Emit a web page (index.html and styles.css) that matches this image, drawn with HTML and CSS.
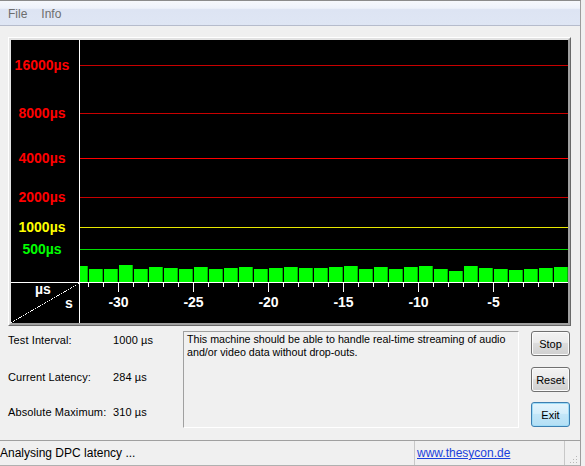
FILE: index.html
```html
<!DOCTYPE html>
<html lang="en">
  <head>
    <meta charset="utf-8">
    <title>DPC Latency Checker</title>
    <link rel="stylesheet" href="styles.css">
  </head>
  <body>
    <div class="window">
      <div class="menubar">
        <span class="menu-item">File</span>
        <span class="menu-item">Info</span>
      </div>

      <div class="main">
        <div class="frame">
          <div class="chart">
            <div class="upper">
              <div class="yaxis"></div>
              <div class="plot">
                <div class="bar" style="height:16px"></div>
                <div class="bar" style="height:13px"></div>
                <div class="bar" style="height:13px"></div>
                <div class="bar" style="height:17px"></div>
                <div class="bar" style="height:13px"></div>
                <div class="bar" style="height:15px"></div>
                <div class="bar" style="height:14px"></div>
                <div class="bar" style="height:13px"></div>
                <div class="bar" style="height:15px"></div>
                <div class="bar" style="height:13px"></div>
                <div class="bar" style="height:14px"></div>
                <div class="bar" style="height:15px"></div>
                <div class="bar" style="height:13px"></div>
                <div class="bar" style="height:14px"></div>
                <div class="bar" style="height:15px"></div>
                <div class="bar" style="height:14px"></div>
                <div class="bar" style="height:14px"></div>
                <div class="bar" style="height:15px"></div>
                <div class="bar" style="height:16px"></div>
                <div class="bar" style="height:13px"></div>
                <div class="bar" style="height:15px"></div>
                <div class="bar" style="height:13px"></div>
                <div class="bar" style="height:15px"></div>
                <div class="bar" style="height:16px"></div>
                <div class="bar" style="height:13px"></div>
                <div class="bar" style="height:11px"></div>
                <div class="bar" style="height:16px"></div>
                <div class="bar" style="height:14px"></div>
                <div class="bar" style="height:13px"></div>
                <div class="bar" style="height:12px"></div>
                <div class="bar" style="height:13px"></div>
                <div class="bar" style="height:14px"></div>
                <div class="bar" style="height:15px"></div>
              </div>

              <!-- threshold lines, one per level -->
              <div class="level lv-16000"><span class="tag red">16000µs</span><span class="line dim-red"></span></div>
              <div class="level lv-8000"><span class="tag red">8000µs</span><span class="line dim-red"></span></div>
              <div class="level lv-4000"><span class="tag red">4000µs</span><span class="line red-line"></span></div>
              <div class="level lv-2000"><span class="tag red">2000µs</span><span class="line dim-red"></span></div>
              <div class="level lv-1000"><span class="tag yellow">1000µs</span><span class="line yellow-line"></span></div>
              <div class="level lv-500"><span class="tag green">500µs</span><span class="line green-line"></span></div>
            </div>

            <div class="lower">
              <div class="corner">
                <svg width="68" height="40" viewBox="0 0 68 40" shape-rendering="crispEdges">
                  <line x1="0" y1="40" x2="68" y2="0" stroke="#fff" stroke-width="1" stroke-dasharray="1 1"/>
                </svg>
                <div class="unit-us">µs</div>
                <div class="unit-s">s</div>
              </div>
              <div class="xaxis">
                <div class="ticks"></div>
                <div class="xlabels">
                  <span>-30</span>
                  <span>-25</span>
                  <span>-20</span>
                  <span>-15</span>
                  <span>-10</span>
                  <span>-5</span>
                </div>
              </div>
            </div>
          </div>
        </div>

        <div class="panel">
          <div class="stats">
            <span>Test Interval:</span><span>1000 µs</span>
            <span>Current Latency:</span><span>284 µs</span>
            <span>Absolute Maximum:</span><span>310 µs</span>
          </div>
          <div class="message">This machine should be able to handle real-time streaming of audio<br>and/or video data without drop-outs.</div>
          <div class="buttons">
            <button class="btn">Stop</button>
            <button class="btn btn-reset">Reset</button>
            <button class="btn btn-default">Exit</button>
          </div>
        </div>
      </div>

      <div class="statusbar">
        <div class="status-text">Analysing DPC latency ...</div>
        <div class="status-link"><a href="#">www.thesycon.de</a></div>
        <div class="grip">
          <svg width="12" height="12" viewBox="0 0 12 12">
            <rect x="9" y="3" width="1" height="1" fill="#b8b8b8"/>
            <rect x="6" y="6" width="1" height="1" fill="#b8b8b8"/>
            <rect x="9" y="6" width="1" height="1" fill="#b8b8b8"/>
            <rect x="3" y="9" width="1" height="1" fill="#b8b8b8"/>
            <rect x="6" y="9" width="1" height="1" fill="#b8b8b8"/>
            <rect x="9" y="9" width="1" height="1" fill="#b8b8b8"/>
          </svg>
        </div>
      </div>
    </div>
  </body>
</html>
```

FILE: styles.css
```css
body {
  margin: 0;
  background: #f0f0f0;
  font-family: "Liberation Sans", Arial, sans-serif;
  font-size: 11px;
  color: #000;
}

.window {
  width: 581px;
  height: 466px;
  box-sizing: border-box;
  border-top: 1px solid #8b8b8b;
  border-right: 1px solid #9c9c9c;
  display: flex;
  flex-direction: column;
  background: #f0f0f0;
}

/* menu */
.menubar {
  height: 25px;
  box-sizing: border-box;
  border-bottom: 1px solid #b6bccc;
  background: linear-gradient(#f6f8fc, #eef2fa 30%, #dde4f3 36%, #dfe6f4);
  display: flex;
  padding: 1px 0 0 1px;
  font-size: 12px;
  line-height: 24px;
  color: #6d6d6d;
}
.menu-item {
  padding: 0 7px;
}

.main {
  flex: 1;
  padding: 11px 0 0 8px;
}

/* chart */
.frame {
  width: 563px;
  box-sizing: border-box;
  border: 1px solid;
  border-color: #fff #696969 #696969 #fff;
}
.chart {
  border: 2px solid;
  border-color: #e3e3e3 #a0a0a0 #a0a0a0 #e3e3e3;
  background: #000;
  height: 283px;
}
.upper {
  position: relative;
  display: flex;
  height: 243px;
  box-sizing: border-box;
  border-bottom: 1px solid #fff;
}
.yaxis {
  width: 69px;
  box-sizing: border-box;
  border-right: 1px solid #fff;
}
.plot {
  flex: 1;
  display: flex;
  justify-content: flex-end;
  align-items: flex-end;
  gap: 1px;
  overflow: hidden;
}
.bar {
  flex: none;
  width: 14px;
  box-sizing: border-box;
  background: #00ff00;
  border-right: 1px solid #00b400;
}

.level {
  position: absolute;
  left: 0;
  right: 0;
  height: 15px;
  display: flex;
  align-items: center;
}
.lv-16000 { top: 18px; }
.lv-8000 { top: 66px; }
.lv-4000 { top: 111px; }
.lv-2000 { top: 150px; }
.lv-1000 { top: 180px; }
.lv-500 { top: 202px; }

.tag {
  width: 69px;
  box-sizing: border-box;
  padding-right: 7px;
  text-align: center;
  font: bold 14px/15px "Liberation Sans", Arial, sans-serif;
}
.red { color: #ff0000; }
.yellow { color: #ffff00; }
.green { color: #00ff00; }

.line {
  flex: 1;
  height: 1px;
}
.dim-red { background: #c80000; }
.red-line { background: #ff0000; }
.yellow-line { background: #e8e800; }
.green-line { background: #00dd00; }

.lower {
  display: flex;
  height: 40px;
}
.corner {
  position: relative;
  width: 69px;
  box-sizing: border-box;
  border-right: 1px solid #fff;
  color: #fff;
  font: bold 14px/14px "Liberation Sans", Arial, sans-serif;
}
.corner svg {
  position: absolute;
  left: 0;
  top: 0;
}
.unit-us {
  margin-top: -1px;
  padding-left: 24px;
}
.unit-s {
  padding-left: 54px;
}

.xaxis {
  flex: 1;
}
.ticks {
  height: 9px;
  background:
    repeating-linear-gradient(90deg, #fff 0 1px, transparent 1px 75px) 38px 0 / 100% 9px no-repeat,
    repeating-linear-gradient(90deg, #fff 0 1px, transparent 1px 15px) 8px 0 / 100% 4px no-repeat;
}
.xlabels {
  display: flex;
  margin-top: 3px;
  padding-left: 1px;
  color: #fff;
  font: bold 14px/14px "Liberation Sans", Arial, sans-serif;
}
.xlabels span {
  width: 75px;
  text-align: center;
}

/* lower panel */
.panel {
  display: flex;
  margin-top: 5px;
}
.stats {
  width: 175px;
  display: grid;
  grid-template-columns: 105px 1fr;
  grid-template-rows: 37px 35px 13px;
  align-content: start;
  padding-top: 3px;
  line-height: 13px;
  letter-spacing: 0.1px;
}
.message {
  width: 336px;
  height: 97px;
  box-sizing: border-box;
  border: 1px solid;
  border-color: #a0a0a0 #fff #fff #a0a0a0;
  padding: 1px 3px;
  font-size: 10.7px;
  line-height: 13px;
  white-space: nowrap;
}
.buttons {
  margin-left: 12px;
  display: flex;
  flex-direction: column;
}
.btn {
  width: 39px;
  height: 25px;
  padding: 0;
  font: 11px "Liberation Sans", Arial, sans-serif;
  color: #000;
  border: 1px solid #707070;
  border-radius: 3px;
  background: linear-gradient(#f2f2f2, #ebebeb 45%, #dddddd 50%, #cfcfcf);
  box-shadow: inset 0 0 0 1px #fbfbfb;
}
.btn-reset {
  margin-top: 11px;
}
.btn-default {
  margin-top: 10px;
  border-color: #3c7fb1;
  background: linear-gradient(#e5f4fc, #d3eefb 45%, #c2e6f8 50%, #b4dff5);
  box-shadow: inset 0 0 0 1px #9fdcf7;
}

/* status bar */
.statusbar {
  height: 26px;
  box-sizing: border-box;
  border-top: 1px solid #a0a0a0;
  border-bottom: 1px solid #b0b0b0;
  display: flex;
  font-size: 12px;
  line-height: 24px;
}
.status-text {
  width: 414px;
}
.status-link {
  width: 150px;
  box-sizing: border-box;
  border-left: 1px solid #c8c8c8;
  padding-left: 2px;
}
.status-link a {
  color: #1a3fdc;
}
.grip {
  flex: 1;
  border-left: 1px solid #c8c8c8;
  display: flex;
  justify-content: flex-end;
  align-items: flex-end;
}
.grip svg {
  margin: 0 1px 0 0;
}
```
